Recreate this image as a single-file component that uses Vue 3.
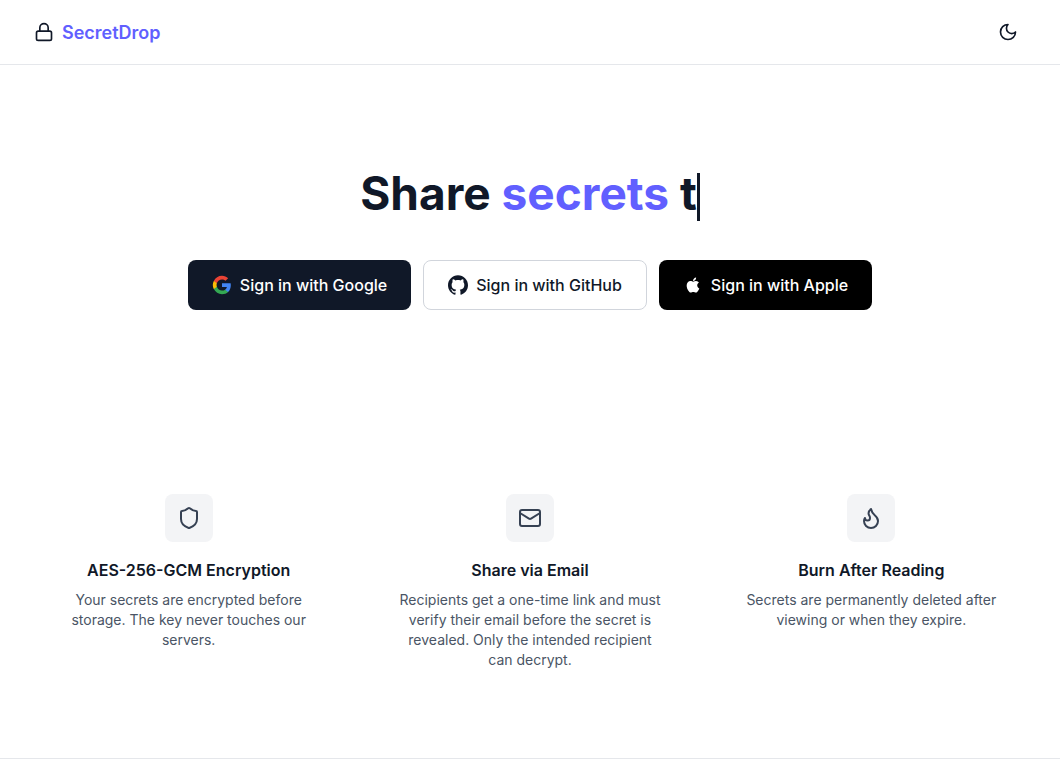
<script setup>
const features = [
  {
    icon: 'shield',
    title: 'AES-256-GCM Encryption',
    text: 'Your secrets are encrypted before storage. The key never touches our servers.',
  },
  {
    icon: 'mail',
    title: 'Share via Email',
    text: 'Recipients get a one-time link and must verify their email before the secret is revealed. Only the intended recipient can decrypt.',
  },
  {
    icon: 'flame',
    title: 'Burn After Reading',
    text: 'Secrets are permanently deleted after viewing or when they expire.',
  },
]
</script>

<template>
  <div class="page">
    <header class="header">
      <div class="container bar">
        <a class="brand" href="#">
          <svg class="line-icon" viewBox="0 0 24 24" aria-hidden="true">
            <rect x="3" y="11" width="18" height="11" rx="2" />
            <path d="M7 11V7a5 5 0 0 1 10 0v4" />
          </svg>
          <span>SecretDrop</span>
        </a>
        <button class="theme" type="button" aria-label="Toggle theme">
          <svg class="line-icon" viewBox="0 0 24 24" aria-hidden="true">
            <path d="M12 3a6 6 0 0 0 9 9 9 9 0 1 1-9-9Z" />
          </svg>
        </button>
      </div>
    </header>

    <main>
      <section class="container hero">
        <h1>Share <span class="accent">secrets</span> t<span class="caret"></span></h1>
        <div class="actions">
          <button class="btn dark" type="button">
            <svg viewBox="0 0 24 24" aria-hidden="true">
              <path fill="#4285F4" d="M22.56 12.25c0-.78-.07-1.53-.2-2.25H12v4.26h5.92a5.06 5.06 0 0 1-2.2 3.32v2.77h3.57c2.08-1.92 3.27-4.74 3.27-8.1z" />
              <path fill="#34A853" d="M12 23c2.97 0 5.46-.98 7.28-2.66l-3.57-2.77c-.98.66-2.23 1.06-3.71 1.06-2.86 0-5.29-1.93-6.16-4.53H2.18v2.84C3.99 20.53 7.7 23 12 23z" />
              <path fill="#FBBC05" d="M5.84 14.09a6.6 6.6 0 0 1 0-4.18V7.07H2.18a11 11 0 0 0 0 9.86l3.66-2.84z" />
              <path fill="#EA4335" d="M12 5.38c1.62 0 3.06.56 4.21 1.64l3.15-3.15C17.45 2.09 14.97 1 12 1 7.7 1 3.99 3.47 2.18 7.07l3.66 2.84c.87-2.6 3.3-4.53 6.16-4.53z" />
            </svg>
            Sign in with Google
          </button>
          <button class="btn outline" type="button">
            <svg viewBox="0 0 24 24" fill="currentColor" aria-hidden="true">
              <path d="M12 .297c-6.63 0-12 5.373-12 12 0 5.303 3.438 9.8 8.205 11.385.6.113.82-.258.82-.577 0-.285-.01-1.04-.015-2.04-3.338.724-4.042-1.61-4.042-1.61C4.422 18.07 3.633 17.7 3.633 17.7c-1.087-.744.084-.729.084-.729 1.205.084 1.838 1.236 1.838 1.236 1.07 1.835 2.809 1.305 3.495.998.108-.776.417-1.305.76-1.605-2.665-.3-5.466-1.332-5.466-5.93 0-1.31.465-2.38 1.235-3.22-.135-.303-.54-1.523.105-3.176 0 0 1.005-.322 3.3 1.23.96-.267 1.98-.399 3-.405 1.02.006 2.04.138 3 .405 2.28-1.552 3.285-1.23 3.285-1.23.645 1.653.24 2.873.12 3.176.765.84 1.23 1.91 1.23 3.22 0 4.61-2.805 5.625-5.475 5.92.42.36.81 1.096.81 2.22 0 1.606-.015 2.896-.015 3.286 0 .315.21.69.825.57C20.565 22.092 24 17.592 24 12.297c0-6.627-5.373-12-12-12" />
            </svg>
            Sign in with GitHub
          </button>
          <button class="btn black" type="button">
            <svg viewBox="0 0 24 24" fill="currentColor" aria-hidden="true">
              <path d="M17.05 20.28c-.98.95-2.05.8-3.08.35-1.09-.46-2.09-.48-3.24 0-1.44.62-2.2.44-3.06-.35C2.79 15.25 3.51 7.59 9.05 7.31c1.35.07 2.29.74 3.08.8 1.18-.24 2.31-.93 3.57-.84 1.51.12 2.65.72 3.4 1.8-3.12 1.87-2.38 5.98.48 7.13-.57 1.5-1.31 2.99-2.54 4.09zM12.03 7.25c-.15-2.23 1.66-4.07 3.74-4.25.29 2.58-2.34 4.5-3.74 4.25z" />
            </svg>
            Sign in with Apple
          </button>
        </div>
      </section>

      <section class="container features">
        <article v-for="f in features" :key="f.title" class="feature">
          <div class="tile">
            <svg class="line-icon large" viewBox="0 0 24 24" aria-hidden="true">
              <path v-if="f.icon === 'shield'" d="M20 13c0 5-3.5 7.5-7.66 8.95a1 1 0 0 1-.67-.01C7.5 20.5 4 18 4 13V6a1 1 0 0 1 1-1c2 0 4.5-1.2 6.24-2.72a1.17 1.17 0 0 1 1.52 0C14.51 3.81 17 5 19 5a1 1 0 0 1 1 1z" />
              <template v-else-if="f.icon === 'mail'">
                <rect x="2" y="4" width="20" height="16" rx="2" />
                <path d="m22 7-8.97 5.7a1.94 1.94 0 0 1-2.06 0L2 7" />
              </template>
              <path v-else d="M8.5 14.5A2.5 2.5 0 0 0 11 12c0-1.38-.5-2-1-3-1.072-2.143-.224-4.054 2-6 .5 2.5 2 4.9 4 6.5 2 1.6 3 3.5 3 5.5a7 7 0 1 1-14 0c0-1.153.433-2.294 1-3a2.5 2.5 0 0 0 2.5 2.5z" />
            </svg>
          </div>
          <h2>{{ f.title }}</h2>
          <p>{{ f.text }}</p>
        </article>
      </section>
    </main>

    <footer class="footer"></footer>
  </div>
</template>

<style>
body {
  margin: 0;
  background: #fff;
}
</style>

<style scoped>
.page {
  display: flex;
  flex-direction: column;
  height: 100vh;
  overflow: hidden;
  color: #101828;
  font-family: Inter, "Liberation Sans", sans-serif;
  font-size: 16px;
  line-height: 24px;
}
main {
  flex: none;
}
.container {
  box-sizing: border-box;
  width: 100%;
  max-width: 1024px;
  margin: 0 auto;
  padding: 0 16px;
}
.header {
  border-bottom: 1px solid #e5e7eb;
}
.bar {
  display: flex;
  align-items: center;
  justify-content: space-between;
  height: 64px;
}
.brand {
  display: flex;
  align-items: center;
  gap: 8px;
  color: #101828;
  font-size: 18px;
  font-weight: 600;
  line-height: 27px;
  text-decoration: none;
}
.brand span,
.accent {
  color: #615fff;
}
.line-icon {
  display: block;
  width: 20px;
  height: 20px;
  fill: none;
  stroke: currentColor;
  stroke-width: 2;
  stroke-linecap: round;
  stroke-linejoin: round;
}
.line-icon.large {
  width: 24px;
  height: 24px;
}
.theme {
  padding: 8px;
  border: 0;
  border-radius: 8px;
  background: none;
  color: inherit;
  cursor: pointer;
}
.hero {
  padding-top: 96px;
  padding-bottom: 96px;
  text-align: center;
}
h1 {
  margin: 0 0 35px;
  font-size: 46px;
  font-weight: 700;
  line-height: 64px;
}
.caret {
  display: inline-block;
  width: 3px;
  height: 48px;
  background: #101828;
  vertical-align: middle;
}
.actions {
  display: flex;
  flex-wrap: wrap;
  justify-content: center;
  gap: 12px;
}
.btn {
  display: flex;
  align-items: center;
  gap: 8px;
  padding: 12px 24px;
  border: 0;
  border-radius: 8px;
  font: inherit;
  font-weight: 500;
  color: #fff;
  cursor: pointer;
}
.btn svg {
  width: 20px;
  height: 20px;
}
.dark {
  background: #101828;
}
.outline {
  border: 1px solid #d1d5dc;
  background: #fff;
  color: #101828;
}
.black {
  background: #000;
}
.features {
  display: grid;
  grid-template-columns: repeat(3, 1fr);
  gap: 32px;
  padding-top: 64px;
  padding-bottom: 64px;
}
.feature {
  padding: 24px;
  text-align: center;
}
.tile {
  display: flex;
  align-items: center;
  justify-content: center;
  width: 48px;
  height: 48px;
  margin: 0 auto 16px;
  border-radius: 8px;
  background: #f3f4f6;
  color: #364153;
}
h2 {
  margin: 0 0 8px;
  font-size: 16px;
  font-weight: 600;
  line-height: 24px;
}
p {
  margin: 0;
  color: #4a5565;
  font-size: 14px;
  line-height: 20px;
}
.footer {
  flex: 1;
  border-top: 1px solid #e5e7eb;
}
@media (max-width: 720px) {
  .page {
    height: auto;
    min-height: 100vh;
  }
  .features {
    grid-template-columns: 1fr;
  }
}
</style>
